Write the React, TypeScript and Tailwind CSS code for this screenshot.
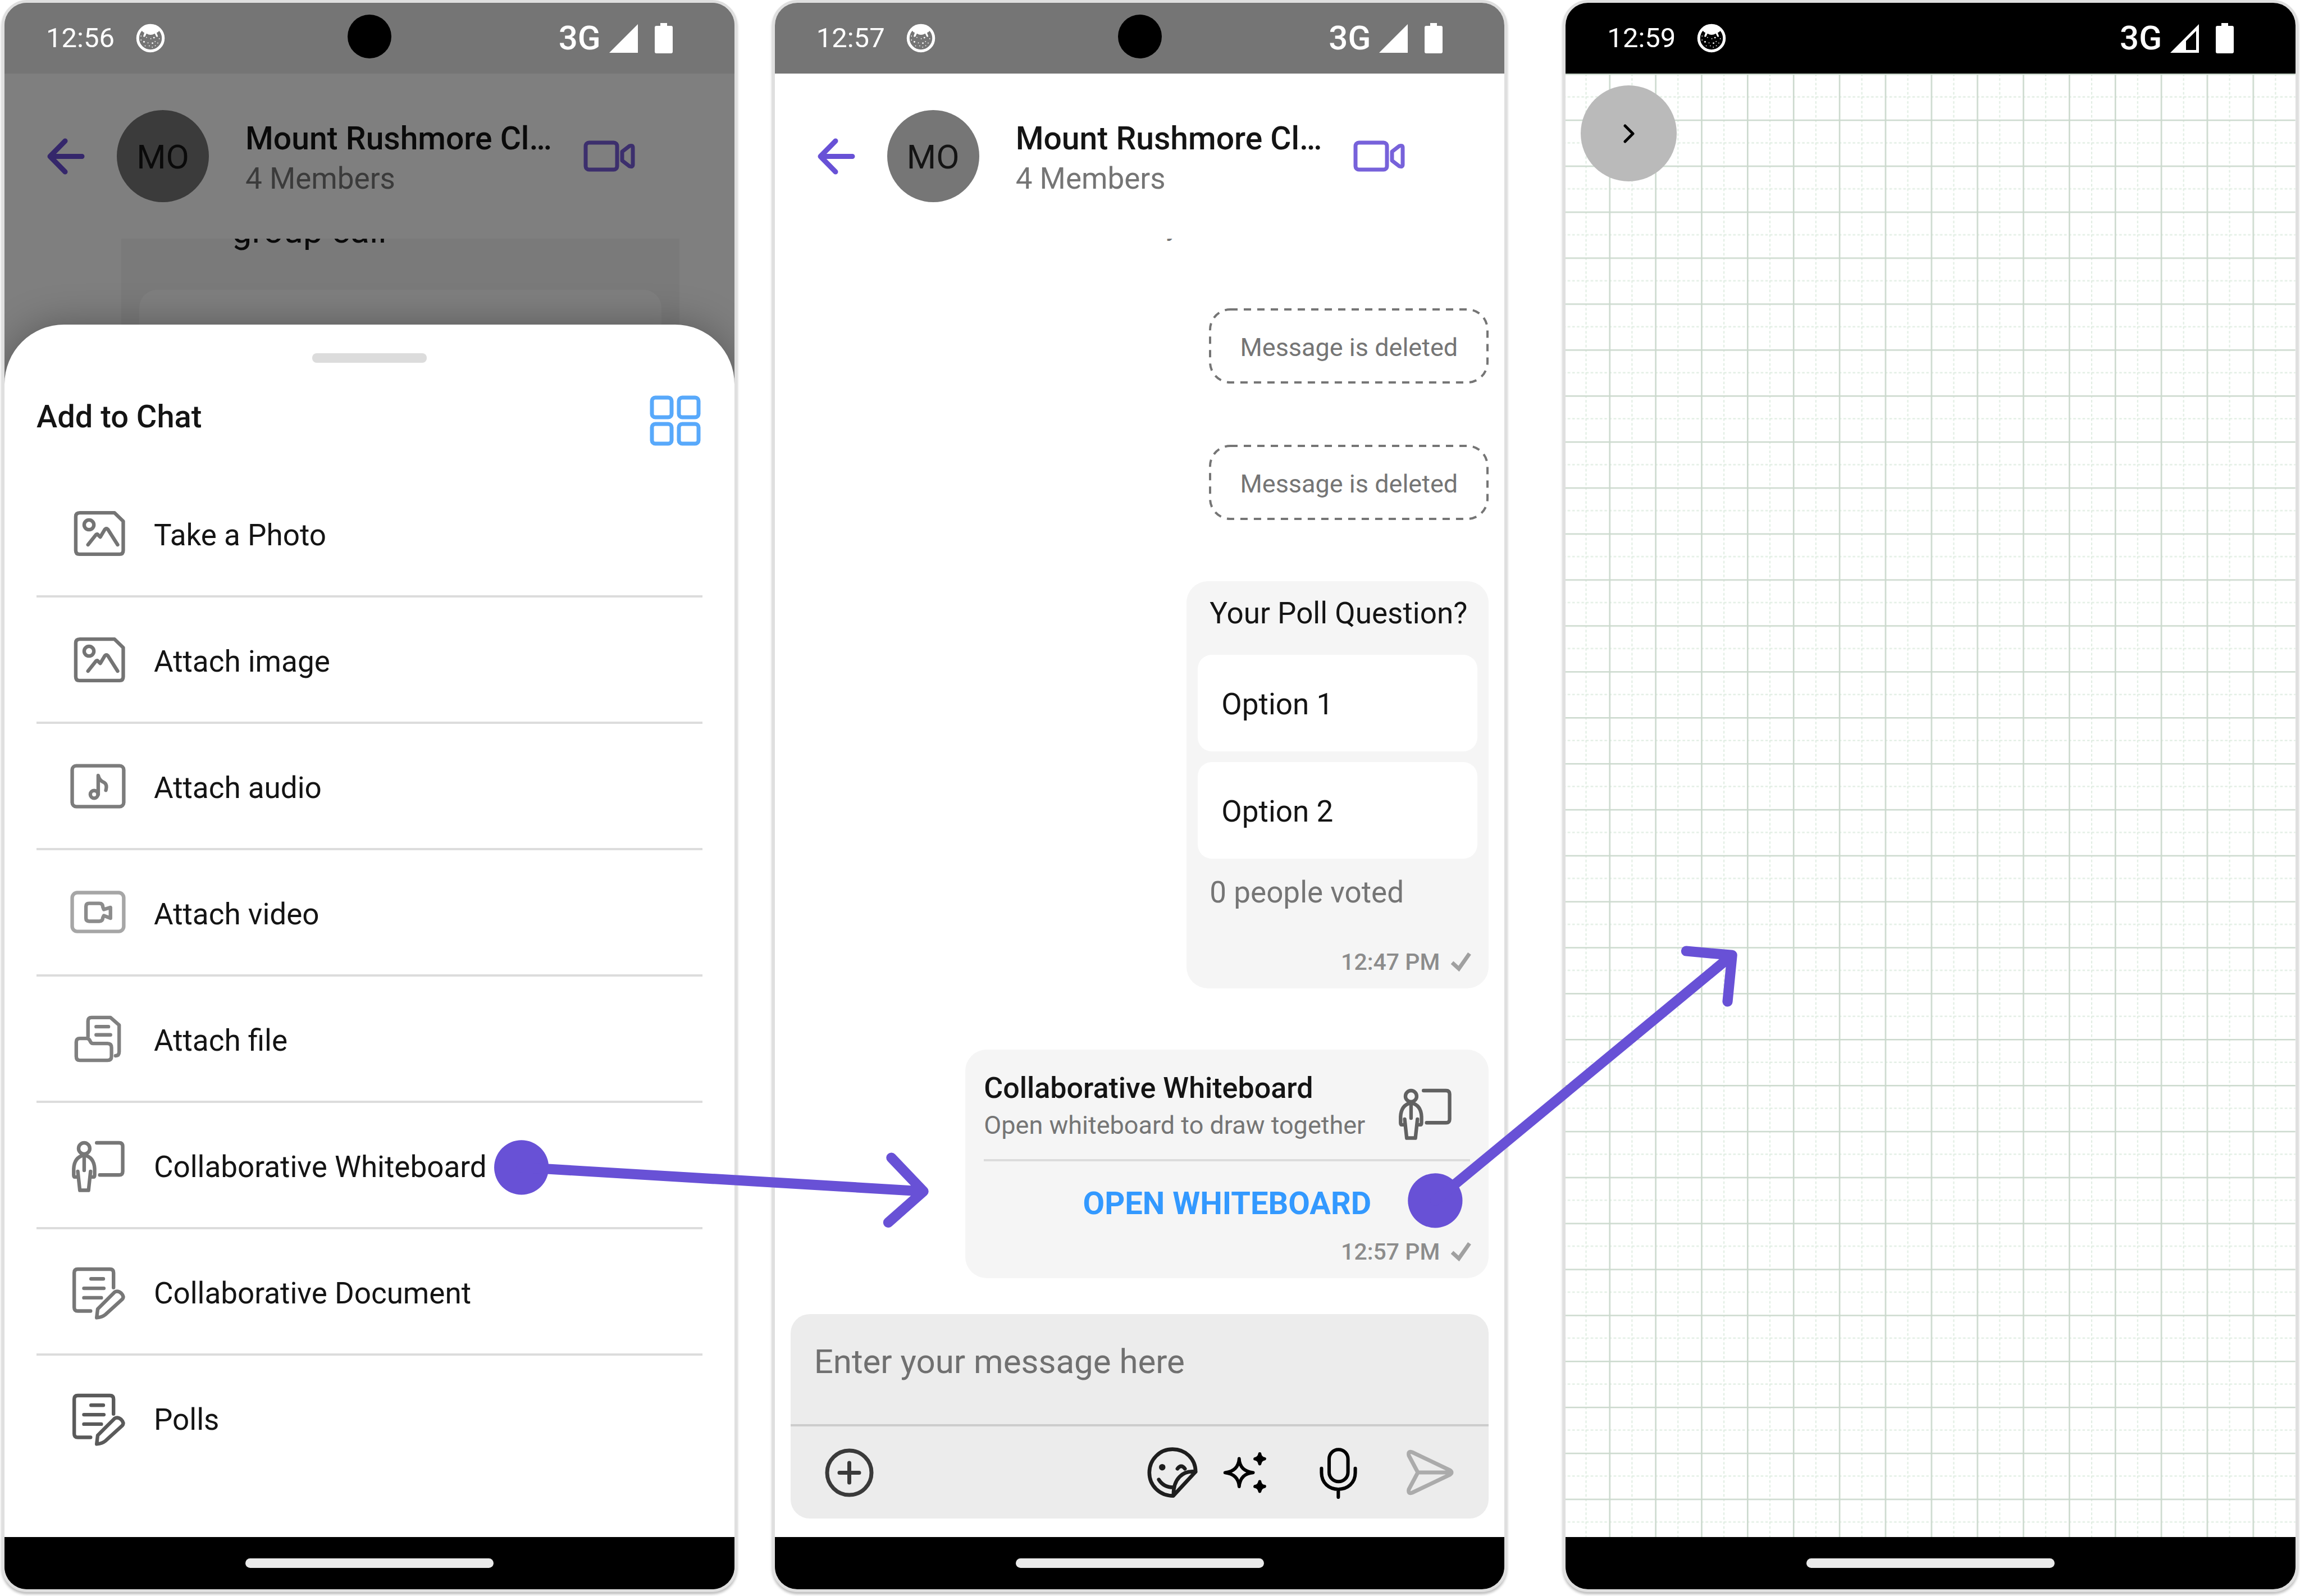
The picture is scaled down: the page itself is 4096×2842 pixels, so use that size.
import type { ReactNode } from "react";

/* ---------- status bar ---------- */

function CatBadge() {
  return (
    <svg viewBox="555 71 176 176" className="size-[52px]" aria-hidden="true">
      <circle cx="643" cy="159" r="77" fill="none" stroke="#fff" strokeWidth="17" />
      <path
        d="M590 112 Q608 84 643 82 Q678 84 698 112 Q690 124 680 126 L688 148 Q684 153 678 150 L669 131 Q643 146 619 131 L610 150 Q604 154 599 148 L606 126 Q596 124 590 112 Z"
        fill="#fff"
      />
      <g fill="#fff">
        <circle cx="604" cy="181" r="5" />
        <circle cx="655" cy="189" r="5" />
        <circle cx="664" cy="156" r="5" />
        <circle cx="628" cy="187" r="3" />
        <circle cx="645" cy="162" r="3" />
        <circle cx="619" cy="154" r="3" />
        <circle cx="671" cy="179" r="3" />
        <circle cx="687" cy="188" r="3" />
        <circle cx="696" cy="162" r="3" />
        <circle cx="586" cy="170" r="3" />
        <circle cx="586" cy="146" r="3" />
        <circle cx="611" cy="205" r="3" />
        <circle cx="636" cy="205" r="3" />
        <circle cx="654" cy="213" r="3" />
        <circle cx="672" cy="204" r="3" />
      </g>
    </svg>
  );
}

function StatusBar({ time, dark = false }: { time: string; dark?: boolean }) {
  return (
    <div
      className={`relative flex h-[126px] shrink-0 items-center pl-[74px] pr-[110px] text-white ${dark ? "bg-black" : "bg-[#757575]"}`}
    >
      <span className="text-[49px] leading-[60px]">{time}</span>
      <span className="ml-[38px]">
        <CatBadge />
      </span>
      {!dark && <span className="absolute left-1/2 top-[21px] size-[78px] -translate-x-1/2 rounded-full bg-black" />}
      <span className="ml-auto text-[60px] font-medium leading-[70px]">3G</span>
      <svg viewBox="0 0 51 51" className="ml-[15px] size-[51px]" aria-hidden="true">
        {dark ? (
          <path fillRule="evenodd" fill="#fff" d="M0 51 L51 0 V51 Z M28 46 H46 V12 L28 30 Z" />
        ) : (
          <path fill="#fff" d="M0 51 L51 0 V51 Z" />
        )}
      </svg>
      <svg viewBox="0 0 32 54" className="ml-[30px] h-[54px] w-[32px]" aria-hidden="true">
        <path fill="#fff" d="M10 0 H22 V5 H29 Q32 5 32 8 V51 Q32 54 29 54 H3 Q0 54 0 51 V8 Q0 5 3 5 H10 Z" />
      </svg>
    </div>
  );
}

function NavBar() {
  return (
    <div className="flex h-[93px] shrink-0 items-center justify-center bg-black">
      <span className="h-[17px] w-[442px] rounded-full bg-[#eaeaea]" />
    </div>
  );
}

function Phone({ label, children, className }: { label: string; children: ReactNode; className: string }) {
  return (
    <section
      aria-label={label}
      className={`flex min-w-0 flex-1 flex-col overflow-hidden rounded-[45px] border-[5px] border-[#dfdfdf] shadow-[0_4px_4px_rgba(0,0,0,0.25)] ${className}`}
    >
      {children}
    </section>
  );
}

/* ---------- chat header ---------- */

function ChatHeader({ dimmed = false }: { dimmed?: boolean }) {
  const accent = dimmed ? "#35276b" : "#6851d6";
  return (
    <header className="flex h-[294px] shrink-0 items-center pl-[76px] pr-[177px]">
      <button aria-label="Back">
        <svg viewBox="0 0 67 65" className="h-[65px] w-[67px]" fill="none" stroke={accent} strokeWidth="9" strokeLinecap="round" strokeLinejoin="round">
          <path d="M32 5 L5 32.500 L32 60 M5 32.500 H62" />
        </svg>
      </button>
      <span
        className={`ml-[57px] flex size-[164px] items-center justify-center rounded-full pt-1 text-[60px] ${dimmed ? "bg-[#3b3b3b] text-[#0a0a0a]" : "bg-[#767676] text-[#141414]"}`}
      >
        MO
      </span>
      <div className="ml-[65px] min-w-0 flex-1 pt-2">
        <h1 className={`whitespace-nowrap text-[57px] font-medium leading-[66px] ${dimmed ? "text-[#0a0a0a]" : "text-[#141414]"}`}>
          Mount Rushmore Cl…
        </h1>
        <p className={`mt-[6px] text-[53px] leading-[64px] ${dimmed ? "text-[#3b3b3b]" : "text-[#757575]"}`}>4 Members</p>
      </div>
      <button aria-label="Video call">
        <svg viewBox="0 0 92 56" className="h-[56px] w-[92px]" fill="none" stroke={accent} strokeWidth="7" strokeOpacity="0.9" strokeLinejoin="round">
          <rect x="4" y="4" width="56" height="48" rx="6" />
          <path d="M69 20 L82 10 Q88 8 88 13 V43 Q88 48 82 46 L69 36 Z" />
        </svg>
      </button>
    </header>
  );
}

/* ---------- attachment sheet ---------- */

function SheetIcon({ children, color }: { children: ReactNode; color: string }) {
  return (
    <svg
      viewBox="0 0 110 110"
      className="size-[100px] shrink-0"
      fill="none"
      stroke={color}
      strokeWidth="7"
      strokeLinecap="round"
      strokeLinejoin="round"
      aria-hidden="true"
    >
      {children}
    </svg>
  );
}

function ImageIcon() {
  return (
    <SheetIcon color="#747474">
      <path d="M20 14.500 H88 L105 31 V88 Q105 95.500 98 95.500 H19 Q12 95.500 12 88 V22 Q12 14.500 20 14.500 Z" />
      <circle cx="38" cy="38" r="9.500" />
      <path d="M36 77 L52 57 Q54 55 56 58 L60 62 L69 47 Q72 44 75 47 L94 77" />
    </SheetIcon>
  );
}

function AudioIcon() {
  return (
    <SheetIcon color="#7c7c7c">
      <rect x="5" y="15" width="101" height="80" rx="8" />
      <circle cx="48" cy="71" r="7.500" />
      <path d="M56 71 V34 Q58 44 68 48 Q74 52 71 63" />
    </SheetIcon>
  );
}

function VideoIcon() {
  return (
    <SheetIcon color="#a6a6a6">
      <rect x="5" y="16" width="101" height="76" rx="10" />
      <path
        stroke="#8c8c8c"
        d="M38 37 H58 Q65 37 65 44 L67 49 L80 45 V66 L67 61 L65 65 Q65 72 58 72 H38 Q32 72 32 66 V43 Q32 37 38 37 Z"
      />
    </SheetIcon>
  );
}

function FileIcon() {
  return (
    <SheetIcon color="#808080">
      <path d="M36 50 V20 Q36 13 43 13 H80 L97 28 V80 Q97 88 90 88" />
      <path d="M52 31 H76 M52 47 H80" />
      <path d="M20 54 H34 Q38 54 40 59 Q42 64 46 64 H74 Q82 64 82 72 V89 Q82 97 74 97 H20 Q13 97 13 89 V61 Q13 54 20 54 Z" />
    </SheetIcon>
  );
}

function PresenterIcon({ color = "#777" }: { color?: string }) {
  return (
    <SheetIcon color={color}>
      <circle cx="28.500" cy="22" r="11" />
      <path d="M28.500 36 V65" />
      <path d="M15 78 H10 Q8 78 8 74 V62 Q9 39 28.500 35 Q48 39 49 62 V74 Q49 78 47 78 H42" />
      <path d="M16 67 L20 104 H37 L41 67" />
      <path d="M53 11 H97 Q104 11 104 18 V67 Q104 74 97 74 H59" />
    </SheetIcon>
  );
}

function NoteIcon({ color }: { color: string }) {
  return (
    <SheetIcon color={color}>
      <path d="M41 93 H16 Q9 93 9 86 V18 Q9 11 16 11 H79 Q86 11 86 18 V47" />
      <path d="M42 30 H66 M28 48.500 H67 M28 67 H62" />
      <path d="M53 106 L55 89 L88 56 Q94 52 101 58 Q108 65 103 70 L70 100 Q64 105 53 106 Z" />
    </SheetIcon>
  );
}

const actions: { label: string; icon: ReactNode }[] = [
  { label: "Take a Photo", icon: <ImageIcon /> },
  { label: "Attach image", icon: <ImageIcon /> },
  { label: "Attach audio", icon: <AudioIcon /> },
  { label: "Attach video", icon: <VideoIcon /> },
  { label: "Attach file", icon: <FileIcon /> },
  { label: "Collaborative Whiteboard", icon: <PresenterIcon /> },
  { label: "Collaborative Document", icon: <NoteIcon color="#777" /> },
  { label: "Polls", icon: <NoteIcon color="#5a5a5a" /> },
];

function ActionSheet() {
  return (
    <div className="flex flex-1 flex-col rounded-t-[106px] bg-white px-[57px] pt-[51px] shadow-[0_0_70px_rgba(0,0,0,0.3)]">
      <span className="h-[17px] w-[204px] self-center rounded-[8px] bg-[#dcdcdc]" />
      <div className="mt-[58px] flex h-[90px] items-start justify-between">
        <h2 className="text-[56px] font-medium leading-[76px] text-[#141414]">Add to Chat</h2>
        <button aria-label="Grid view">
          <svg viewBox="0 0 94 90" className="h-[90px] w-[94px]" fill="none" stroke="#58a9fb" strokeWidth="7">
            <rect x="4" y="4" width="35" height="35" rx="6" />
            <rect x="52" y="4" width="35" height="35" rx="6" />
            <rect x="4" y="51" width="35" height="35" rx="6" />
            <rect x="52" y="51" width="35" height="35" rx="6" />
          </svg>
        </button>
      </div>
      <ul className="mt-[45px]">
        {actions.map((a) => (
          <li key={a.label} className="h-[225px] border-b-4 border-[#dcdcdc] last:border-transparent">
            <button className="flex size-full items-center pl-[59px] text-left">
              {a.icon}
              <span className="ml-[50px] pt-[6px] text-[53px] leading-[64px] text-[#141414]">{a.label}</span>
            </button>
          </li>
        ))}
      </ul>
    </div>
  );
}

function AttachScreen() {
  return (
    <Phone label="Add to chat" className="bg-[#7f7f7f]">
      <StatusBar time="12:56" />
      <ChatHeader dimmed />
      <div className="ml-[208px] mr-[98px] flex h-[153px] shrink-0 flex-col justify-between overflow-hidden bg-[#7a7a7a] px-[32px]">
        <p className="-mt-[50px] pl-[165px] text-[63px] leading-[72px] text-[#0a0a0a]">group call</p>
        <div className="h-[62px] rounded-t-[32px] bg-[#7f7f7f]" />
      </div>
      <ActionSheet />
      <NavBar />
    </Phone>
  );
}

/* ---------- chat ---------- */

function DeletedMessage() {
  return (
    <div className="relative flex h-[134px] w-[498px] items-center justify-center">
      <svg className="absolute inset-0 size-full" aria-hidden="true">
        <rect
          x="2"
          y="2"
          rx="36"
          className="h-[calc(100%-4px)] w-[calc(100%-4px)]"
          fill="none"
          stroke="#757575"
          strokeWidth="4"
          strokeDasharray="13 11"
        />
      </svg>
      <p className="pt-[6px] text-[45px] leading-[56px] text-[#757575]">Message is deleted</p>
    </div>
  );
}

function Receipt({ time }: { time: string }) {
  return (
    <div className="flex items-center justify-end pr-[31px] text-[#8c8c8c]">
      <time className="text-[41px] font-medium leading-[48px]">{time}</time>
      <svg viewBox="0 0 36 36" className="ml-[20px] size-[36px]" fill="none" stroke="#a0a0a0" strokeWidth="7" aria-label="Sent">
        <path d="M2 19 L14 30 L33 3" />
      </svg>
    </div>
  );
}

function PollCard() {
  return (
    <article className="flex w-[538px] flex-col rounded-[38px] bg-[#f5f5f5] pb-[23px] pt-[25px]">
      <h2 className="pl-[41px] text-[53px] leading-[64px] text-[#141414]">Your Poll Question?</h2>
      <div className="mt-[42px] flex flex-col gap-[19px] px-[20px]">
        {["Option 1", "Option 2"].map((o) => (
          <button key={o} className="h-[172px] rounded-[25px] bg-white px-[42px] pt-[4px] text-left text-[53px] leading-[64px] text-[#141414]">
            {o}
          </button>
        ))}
      </div>
      <p className="mb-[68px] mt-[28px] pl-[41px] text-[53px] leading-[64px] text-[#757575]">0 people voted</p>
      <Receipt time="12:47 PM" />
    </article>
  );
}

function WhiteboardCard() {
  return (
    <article className="flex w-[932px] flex-col rounded-[38px] bg-[#f5f5f5] pb-[23px] pt-[37px]">
      <div className="mx-[33px] flex items-end justify-between border-b-4 border-[#dcdcdc] pb-[32px] pr-[31px]">
        <div>
          <h2 className="text-[52px] font-medium leading-[64px] text-[#141414]">Collaborative Whiteboard</h2>
          <p className="mt-[6px] whitespace-nowrap text-[45px] leading-[56px] text-[#757575]">Open whiteboard to draw together</p>
        </div>
        <PresenterIcon color="#616161" />
      </div>
      <button className="mb-[30px] mt-[43px] self-center text-[56px] font-bold leading-[64px] text-[#3399ff]">OPEN WHITEBOARD</button>
      <Receipt time="12:57 PM" />
    </article>
  );
}

function Composer() {
  return (
    <div className="mx-[28px] mb-[33px] flex h-[364px] shrink-0 flex-col rounded-[34px] bg-[#ececec]">
      <input
        aria-label="Message"
        placeholder="Enter your message here"
        className="h-[196px] bg-transparent px-[42px] pb-[28px] text-[60px] text-[#141414] outline-none placeholder:text-[#707070]"
      />
      <div className="flex flex-1 items-center border-t-4 border-[#cccccc] px-[61px]">
        <button aria-label="Add attachment" className="mr-auto">
          <svg viewBox="0 0 87 87" className="size-[87px]" fill="none" stroke="#3a3a3a" strokeWidth="7" strokeLinecap="round">
            <circle cx="43.500" cy="43.500" r="39.500" />
            <path d="M43.500 26 V61 M26 43.500 H61" />
          </svg>
        </button>
        <button aria-label="Stickers">
          <svg viewBox="50 75 305 310" className="h-[94px] w-[92px]" fill="none" stroke="#1e1e1e" strokeWidth="22" strokeLinecap="round" strokeLinejoin="round">
            <path d="M339 226 C339 150 280 93 203 93 C127 93 66 154 66 231 C66 308 127 368 207 368 L339 226 C262 216 207 270 209 362" />
            <path d="M122 272 Q150 318 208 318" />
            <path d="M232 208 Q254 178 276 208" />
            <circle cx="142" cy="199" r="8" fill="#1e1e1e" />
          </svg>
        </button>
        <button aria-label="AI suggestions" className="ml-[43px]">
          <svg viewBox="495 75 260 310" className="h-[94px] w-[79px]" fill="none" stroke="#000" strokeWidth="19" strokeLinecap="round" strokeLinejoin="round">
            <path d="M593 149 Q596 222 675 231 Q600 236 593 313 Q588 240 510 231 Q588 222 593 149 Z" />
            <path fill="#000" d="M714 121 Q716 145 742 150 Q718 154 714 179 Q710 154 686 150 Q710 146 714 121 Z" />
            <path fill="#000" d="M714 284 Q716 308 742 312 Q718 316 714 341 Q710 316 686 312 Q710 308 714 284 Z" />
          </svg>
        </button>
        <button aria-label="Record voice" className="ml-[92px]">
          <svg viewBox="1060 75 235 310" className="h-[94px] w-[71px]" fill="none" stroke="#000" strokeWidth="20" strokeLinecap="round">
            <rect x="1123" y="95" width="111" height="189" rx="55" />
            <path d="M1078 206 V232 C1078 292 1122 329 1177 329 C1232 329 1277 292 1277 232 V206 M1177 329 V376" />
          </svg>
        </button>
        <button aria-label="Send" className="ml-[83px]">
          <svg viewBox="0 0 88 88" className="size-[88px]" fill="none" stroke="#ababab" strokeWidth="7" strokeLinejoin="round" strokeLinecap="round">
            <path d="M13 8 Q5 5 7 14 L23 44 L7 74 Q5 83 13 80 L80 48 Q86 44 80 40 Z M23 44 H80" />
          </svg>
        </button>
      </div>
    </div>
  );
}

function ChatScreen() {
  return (
    <Phone label="Group chat" className="ml-[62px] bg-white">
      <StatusBar time="12:57" />
      <ChatHeader />
      <div className="flex min-h-0 flex-1 flex-col justify-between overflow-hidden">
        <p className="-mt-[43px] pl-[697px] text-[46px] leading-[44px] text-[#757575]">y</p>
        <div className="flex flex-col items-end gap-[109px] pb-[64px] pr-[28px]">
          <DeletedMessage />
          <DeletedMessage />
          <PollCard />
          <WhiteboardCard />
        </div>
      </div>
      <Composer />
      <NavBar />
    </Phone>
  );
}

/* ---------- whiteboard ---------- */

function BoardScreen() {
  return (
    <Phone label="Whiteboard" className="ml-[99px] bg-white">
      <StatusBar time="12:59" dark />
      <div className="relative flex-1 px-[27px] pt-[21px]">
        <svg className="absolute inset-0 size-full" aria-hidden="true">
          <defs>
            <pattern id="board-grid" x="-4.4" y="0" width="81.86" height="81.86" patternUnits="userSpaceOnUse">
              <path d="M40.93 0 V81.86 M0 41.5 H81.86" stroke="#e0ede2" strokeWidth="2.2" strokeDasharray="4.6 3.586" fill="none" />
              <path d="M0 1.3 H81.86 M1.3 0 V81.86" stroke="#cbd9cd" strokeWidth="2.6" fill="none" />
            </pattern>
          </defs>
          <rect width="100%" height="100%" fill="url(#board-grid)" />
        </svg>
        <button aria-label="Open toolbar" className="relative flex size-[171px] items-center justify-center rounded-full bg-[#bababa]">
          <svg viewBox="0 0 20 34" className="h-[34px] w-[20px]" fill="none" stroke="#000" strokeWidth="5" strokeLinecap="round" strokeLinejoin="round">
            <path d="M3 3 L17 17 L3 31" />
          </svg>
        </button>
      </div>
      <NavBar />
    </Phone>
  );
}

/* ---------- flow arrows across the screens ---------- */

function FlowArrows() {
  return (
    <svg
      viewBox="0 0 4508 3128"
      className="pointer-events-none absolute inset-0 size-full"
      fill="none"
      stroke="#6851d6"
      strokeWidth="20"
      strokeLinecap="round"
      strokeLinejoin="round"
      aria-hidden="true"
    >
      <circle cx="1022" cy="2288" r="53.500" fill="#6851d6" stroke="none" />
      <path d="M1022 2288 L1810 2335 M1747 2269 L1810 2335 L1741 2396" />
      <circle cx="2813" cy="2353" r="53.500" fill="#6851d6" stroke="none" />
      <path d="M2813 2353 L3395 1872 M3305 1864 L3395 1872 L3386 1963" />
    </svg>
  );
}

export default function App() {
  return (
    <main className="relative flex min-h-screen bg-white px-[3px] pb-[7px] font-['Roboto',sans-serif]">
      <AttachScreen />
      <ChatScreen />
      <BoardScreen />
      <FlowArrows />
    </main>
  );
}
